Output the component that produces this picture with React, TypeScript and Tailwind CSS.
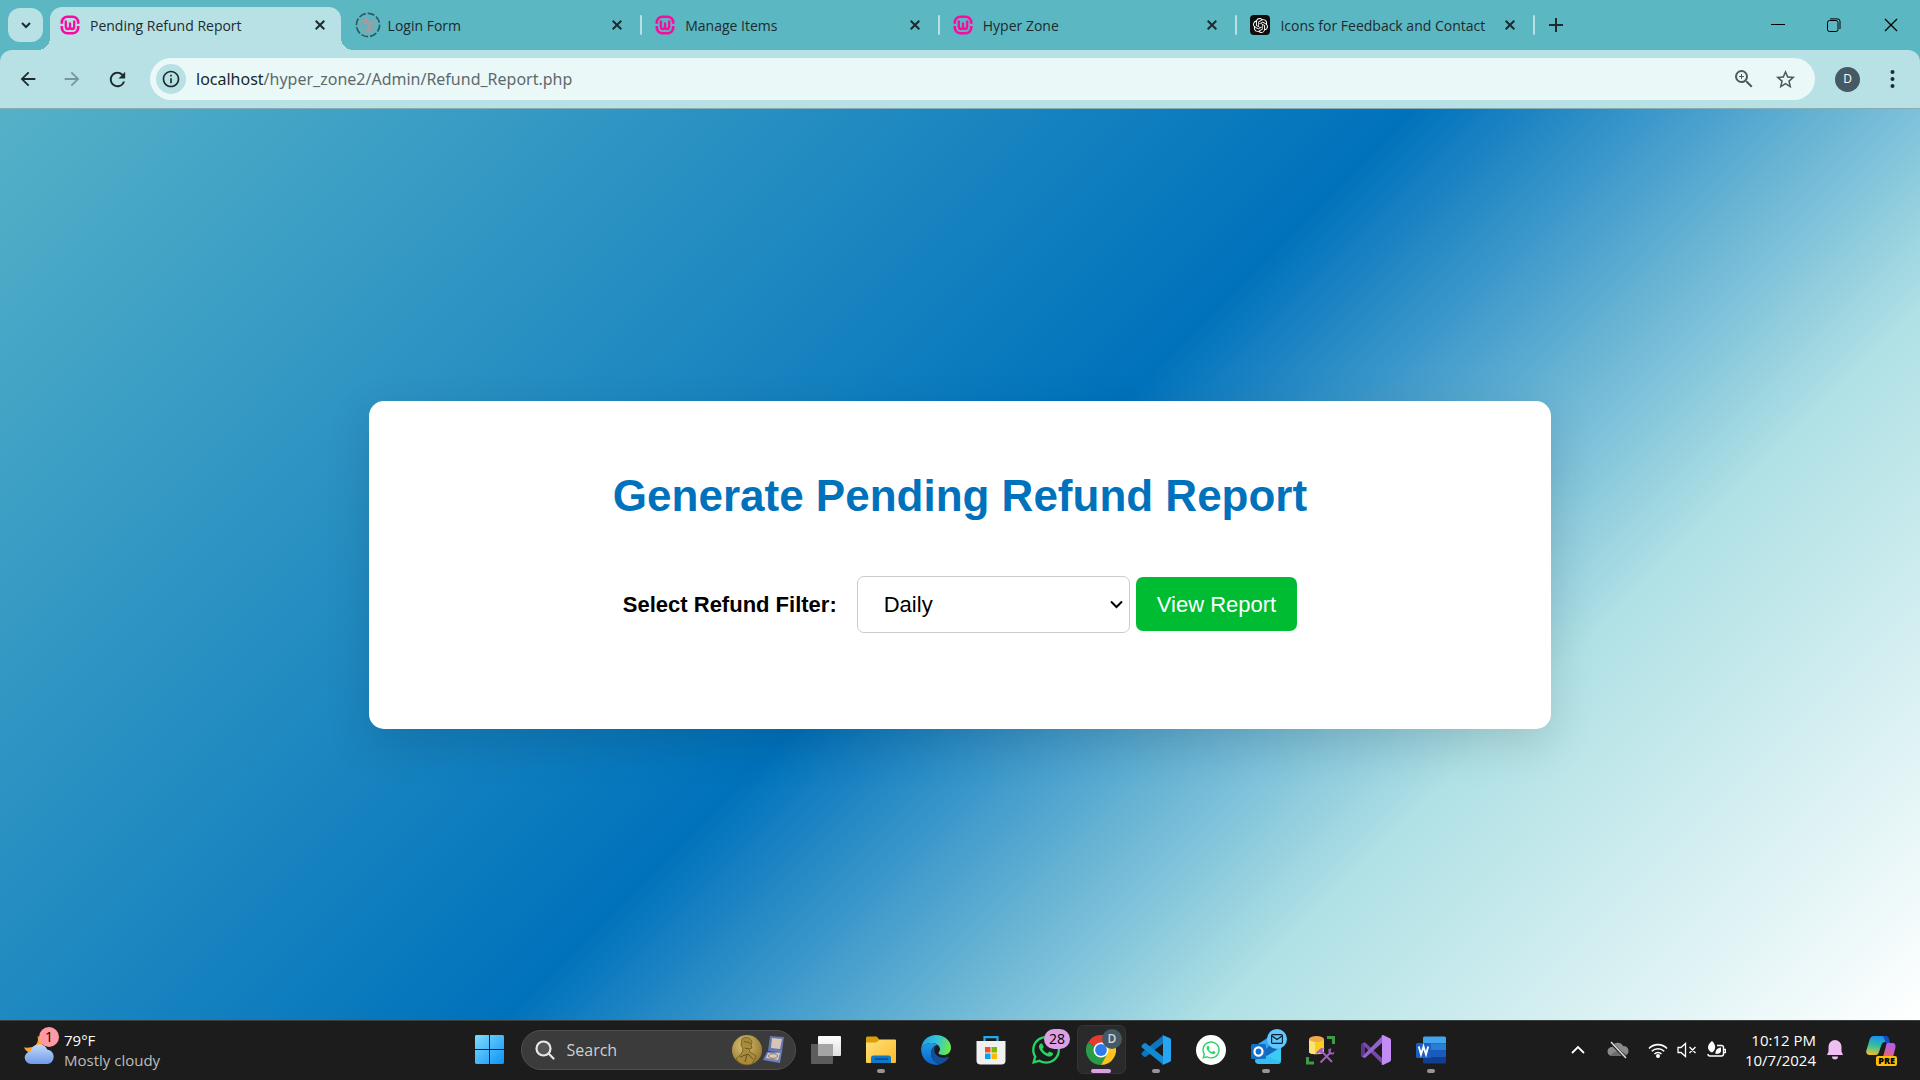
import { useState } from "react";
import type { ReactNode } from "react";
import { FaWhatsapp } from "react-icons/fa";
import { SiOpenai } from "react-icons/si";
import { MdOutlineZoomIn, MdStarBorder, MdRefresh, MdArrowBack, MdArrowForward, MdInfoOutline } from "react-icons/md";

/* ---------- Browser icons ---------- */

function WampIcon() {
  return (
    <svg width="20" height="20" viewBox="0 0 20 20" fill="none" stroke="#fb0aa0" strokeWidth="2.600">
      <path d="M1.800 8.800V7.300A5.500 5.500 0 0 1 7.300 1.800h5.400a5.500 5.500 0 0 1 5.500 5.500v1.500M1.800 11v1.700a5.500 5.500 0 0 0 5.500 5.500h5.400a5.500 5.500 0 0 0 5.500-5.500V11" />
      <path d="M5.800 5.500v6c0 3.300 4.200 3.300 4.200 0V7.500M10 11.500c0 3.300 4.200 3.300 4.200 0v-6" strokeWidth="2.300" />
    </svg>
  );
}

function LoadingGlobe() {
  return (
    <svg width="26" height="26" viewBox="0 0 26 26" fill="none">
      <circle cx="13" cy="13" r="11.600" stroke="#2f5963" strokeWidth="1.700" strokeDasharray="7 2" />
      <circle cx="13" cy="13" r="8" fill="#9a9fa4" />
      <path d="M6 10c3 0 3 3 6 3 2 1 0 4-2 6-3-1-5-5-4-9zM12 5.500c2 1 0 3 2 4s3-2 5 0c-1-3-4-4.500-7-4zM16 13c2-1 4 0 4.500 1-.5 2.500-2 4-3.500 4.500-1-2-2-4-1-5.500z" fill="#5fb3bd" />
    </svg>
  );
}

function GptIcon() {
  return (
    <span className="flex size-5 items-center justify-center rounded-sm bg-[#0d0d0d] text-white">
      <SiOpenai size={15} />
    </span>
  );
}

function CloseX({ size = 10, width = 2 }: { size?: number; width?: number }) {
  return (
    <svg width={size} height={size} viewBox="0 0 10 10" stroke="currentColor" strokeWidth={width} fill="none">
      <path d="M.7.7l8.600 8.600M9.300.7L.7 9.300" />
    </svg>
  );
}

/* ---------- Browser chrome ---------- */

const tabs: { title: string; icon: ReactNode; active?: boolean }[] = [
  { title: "Pending Refund Report", icon: <WampIcon />, active: true },
  { title: "Login Form", icon: <LoadingGlobe /> },
  { title: "Manage Items", icon: <WampIcon /> },
  { title: "Hyper Zone", icon: <WampIcon /> },
  { title: "Icons for Feedback and Contact", icon: <GptIcon /> },
];

function TabStrip() {
  return (
    <div className="flex h-[50px] bg-[#5bb7c1] text-[#1d2b2e]">
      <div className="flex w-[50px] shrink-0 items-center pl-2">
        <button aria-label="Search tabs" className="flex h-[34px] w-[35px] items-center justify-center rounded-xl bg-[#b7e1e4]">
          <svg width="10" height="7" viewBox="0 0 10 7" fill="none" stroke="currentColor" strokeWidth="2">
            <path d="M1 1l4 4 4-4" />
          </svg>
        </button>
      </div>
      <div className="flex w-full max-w-[1488px]">
        {tabs.map((tab, i) => (
          <div key={tab.title} className="flex min-w-0 flex-1 items-stretch">
            <div
              className={
                tab.active
                  ? "relative mt-[7px] flex min-w-0 flex-1 items-center rounded-t-xl bg-[#b7e1e4] pr-[11px] pb-[7px] pl-[10px]"
                  : "flex min-w-0 flex-1 items-center pr-[11px] pl-[10px]"
              }
            >
              {tab.active && (
                <>
                  <span className="absolute bottom-0 -left-3 size-3 bg-[radial-gradient(circle_at_0_0,transparent_12px,#b7e1e4_12px)]" />
                  <span className="absolute -right-3 bottom-0 size-3 bg-[radial-gradient(circle_at_100%_0,transparent_12px,#b7e1e4_12px)]" />
                </>
              )}
              <span className="flex w-5 shrink-0 items-center justify-center">
                <span className="shrink-0">{tab.icon}</span>
              </span>
              <span className="ml-[10px] min-w-0 flex-1 overflow-hidden text-[14px] whitespace-nowrap">{tab.title}</span>
              <button aria-label={`Close ${tab.title}`} className="flex size-5 shrink-0 items-center justify-center">
                <CloseX />
              </button>
            </div>
            <div className="flex w-[7px] shrink-0 items-center pl-[2px]">
              {i > 0 && <span className="h-5 w-[2px] rounded bg-[#b7e1e4]" />}
            </div>
          </div>
        ))}
      </div>
      <button aria-label="New tab" className="flex w-[35px] shrink-0 items-center justify-center">
        <svg width="14" height="14" viewBox="0 0 14 14" stroke="currentColor" strokeWidth="2">
          <path d="M7 0v14M0 7h14" />
        </svg>
      </button>
      <div className="ml-auto flex shrink-0 text-black">
        <button aria-label="Minimize" className="flex w-14 items-center justify-center">
          <svg width="14" height="14" viewBox="0 0 14 14" stroke="currentColor">
            <path d="M0 6.500h14" />
          </svg>
        </button>
        <button aria-label="Restore" className="flex w-14 items-center justify-center">
          <svg width="14" height="14" viewBox="0 0 14 14" stroke="currentColor" fill="none">
            <rect x=".5" y="2.500" width="10.500" height="11" rx="2" />
            <path d="M3 .9h7.500a2.500 2.500 0 0 1 2.500 2.500V11" />
          </svg>
        </button>
        <button aria-label="Close window" className="flex w-[58px] items-center justify-center">
          <CloseX size={14} width={0.9} />
        </button>
      </div>
    </div>
  );
}

function Toolbar() {
  return (
    <div className="bg-[#5bb7c1]">
      <div className="flex h-[58px] items-center rounded-t-xl bg-[#b7e1e4] pr-4 pl-[6px] text-[#1d2b2e]">
        <button aria-label="Back" className="flex w-11 justify-center">
          <MdArrowBack size={22} />
        </button>
        <button aria-label="Forward" className="flex w-11 justify-center text-[#77979b]">
          <MdArrowForward size={22} />
        </button>
        <button aria-label="Reload" className="flex w-[46px] justify-center">
          <MdRefresh size={23} />
        </button>
        <div className="ml-[10px] flex h-[42px] min-w-0 flex-1 items-center rounded-full bg-[#ebf8f8] pr-[18px] pl-[6px]">
          <button aria-label="Site information" className="flex size-[30px] items-center justify-center rounded-full bg-[#b7e1e4]">
            <MdInfoOutline size={20} />
          </button>
          <p className="ml-[10px] flex-1 font-['Noto_Sans','Segoe_UI',sans-serif] text-[16px] text-[#5d6a6d]">
            <span className="text-[#17292c]">localhost</span>/hyper_zone2/Admin/Refund_Report.php
          </p>
          <button aria-label="Zoom" className="flex w-10 justify-center text-[#50595b]">
            <MdOutlineZoomIn size={24} />
          </button>
          <button aria-label="Bookmark this tab" className="ml-[9px] flex w-6 justify-center text-[#50595b]">
            <MdStarBorder size={23} />
          </button>
        </div>
        <button aria-label="Profile" className="ml-5 flex size-[25px] items-center justify-center rounded-full bg-[#455a64] text-[12px] text-white">
          D
        </button>
        <button aria-label="Menu" className="ml-5 flex w-6 justify-center">
          <svg width="5" height="22" viewBox="0 0 5 22" fill="currentColor">
            <circle cx="2.500" cy="4" r="2" />
            <circle cx="2.500" cy="11" r="2" />
            <circle cx="2.500" cy="18" r="2" />
          </svg>
        </button>
      </div>
    </div>
  );
}

/* ---------- Report page ---------- */

function ReportPage() {
  const [filter, setFilter] = useState("Daily");
  return (
    <main className="flex flex-1 items-center justify-center bg-[linear-gradient(135deg,#55b1c8_0%,#0072bc_50%,#b0e1e5_75%,#ffffff_100%)] font-['Liberation_Sans',Arial,sans-serif]">
      <section className="w-full max-w-[1182px] rounded-[15px] bg-white pt-[69px] pb-24 text-center shadow-[0_15px_45px_rgba(0,0,0,0.13)]">
        <h1 className="text-[44px] leading-[52px] font-bold text-[#0072bc]">Generate Pending Refund Report</h1>
        <form className="mt-[54px] flex items-center justify-center text-[22px] text-black" onSubmit={(e) => e.preventDefault()}>
          <label htmlFor="filter" className="font-bold">
            Select Refund Filter:
          </label>
          <div className="relative ml-5">
            <select
              id="filter"
              value={filter}
              onChange={(e) => setFilter(e.target.value)}
              className="h-[57px] w-[273px] appearance-none rounded-[7px] border border-[#cccccc] bg-white pl-[26px]"
            >
              <option>Daily</option>
              <option>Weekly</option>
              <option>Monthly</option>
            </select>
            <svg className="pointer-events-none absolute top-6 right-[7px]" width="13" height="9" viewBox="0 0 13 9" fill="none" stroke="#000" strokeWidth="2">
              <path d="M1 1.500l5.500 5.500L12 1.500" />
            </svg>
          </div>
          <button type="submit" className="ml-[6px] h-[54px] rounded-[7px] bg-[#00bc32] px-[21px] text-white">
            View Report
          </button>
        </form>
      </section>
    </main>
  );
}

/* ---------- Taskbar ---------- */

function WeatherIcon() {
  return (
    <svg width="31" height="31" viewBox="0 0 32 32">
      <defs>
        <linearGradient id="cloud" x1="0" y1="0" x2="0" y2="1">
          <stop offset="0" stopColor="#c3d9fb" />
          <stop offset="1" stopColor="#6f9be8" />
        </linearGradient>
      </defs>
      <path d="M14 2c2 8-3 13-14 12 3 7 12 7 17 1s1-11-3-13z" fill="#f9a62b" />
      <path d="M7.500 31a6.500 6.500 0 0 1-.5-13 9 9 0 0 1 17-2A7.600 7.600 0 0 1 24.500 31z" fill="url(#cloud)" />
    </svg>
  );
}

function StartIcon() {
  return (
    <svg width="29" height="29" viewBox="0 0 29 29">
      <defs>
        <linearGradient id="start" x1="0" y1="0" x2="1" y2="1">
          <stop offset="0" stopColor="#7fdcfb" />
          <stop offset="1" stopColor="#0c93f7" />
        </linearGradient>
      </defs>
      <path d="M1 0h13v14H0V1zM15 0h13l1 1v13H15zM0 15h14v14H1l-1-1zM15 15h14v13l-1 1H15z" fill="url(#start)" />
    </svg>
  );
}

function MedalIcon() {
  return (
    <svg width="54" height="32" viewBox="0 0 54 32">
      <defs>
        <radialGradient id="gold" cx=".4" cy=".35" r=".7">
          <stop offset="0" stopColor="#d9c27a" />
          <stop offset="1" stopColor="#927527" />
        </radialGradient>
      </defs>
      <circle cx="16" cy="16" r="15" fill="url(#gold)" />
      <path d="M11 5c4-3 9-1 10 3l-1 3 1 3-3 1 1 3 6 4-4 8c-5 2-12 1-16-5l6-6 1-4-2-4z" fill="#a88c3c" stroke="#6e5518" strokeWidth=".8" />
      <path d="M13 7c2 2 5 0 6 3M14 14c2 1 3 0 4 1M9 23l8-3 5 5M16 21l-2 7" stroke="#665018" fill="none" />
      <path d="M39 2l14 1-2 15-14-1z" fill="#6577ab" />
      <path d="M41 4l10 1-2 10-9-1z" fill="#d9c4b8" />
      <path d="M36 18l15-1-2 12-17-3z" fill="#6f83b8" />
      <path d="M37 19l12 0-2 7-12-2z" fill="#dbc9bd" />
      <ellipse cx="42" cy="22" rx="4.500" ry="2.300" fill="none" stroke="#8c7461" />
    </svg>
  );
}

function TaskViewIcon() {
  return (
    <svg width="30" height="28" viewBox="0 0 30 28">
      <defs>
        <linearGradient id="tv" x1="0" y1="0" x2="0" y2="1">
          <stop offset="0" stopColor="#fff" />
          <stop offset="1" stopColor="#dedede" />
        </linearGradient>
      </defs>
      <rect x="0" y="8" width="22" height="20" rx="1" fill="#5c5c5c" />
      <rect x="7" y="0" width="23" height="20" rx="1" fill="url(#tv)" />
      <path d="M7 8h15v12H7z" fill="#a5a5a5" />
    </svg>
  );
}

function ExplorerIcon() {
  return (
    <svg width="30" height="28" viewBox="0 0 30 28">
      <defs>
        <linearGradient id="fold" x1="0" y1="0" x2="1" y2="1">
          <stop offset="0" stopColor="#ffe07a" />
          <stop offset="1" stopColor="#fcbc28" />
        </linearGradient>
      </defs>
      <path d="M0 2a1.500 1.500 0 0 1 1.500-1.500h9L14 4v6H0z" fill="#dd9d05" />
      <path d="M0 6.500h10l4-3h15a1 1 0 0 1 1 1V26a1 1 0 0 1-1 1H1a1 1 0 0 1-1-1z" fill="url(#fold)" />
      <path d="M5 27v-5a2.500 2.500 0 0 1 2.500-2.500h15A2.500 2.500 0 0 1 25 22v5z" fill="#0f78c8" />
      <path d="M9 23h13" stroke="#064b8a" strokeWidth="1.500" />
    </svg>
  );
}

function EdgeIcon() {
  return (
    <svg width="30" height="30" viewBox="0 0 30 30">
      <defs>
        <linearGradient id="edgeA" x1="0" y1=".2" x2="1" y2=".4">
          <stop offset="0" stopColor="#1fa1e0" />
          <stop offset=".5" stopColor="#33c1dc" />
          <stop offset="1" stopColor="#6be94a" />
        </linearGradient>
        <linearGradient id="edgeB" x1="0" y1="0" x2="0" y2="1">
          <stop offset="0" stopColor="#1e9ce6" />
          <stop offset="1" stopColor="#0a63c6" />
        </linearGradient>
      </defs>
      <path d="M.2 13C1.300 5 7.500 0 15 0c8.500 0 15 6 15 12.500 0 5-3.500 7.500-7.500 7.500-3 0-5-1-5-2s1.500-1.500 1.500-4c0-3-3.500-6-8-6S2 10 .2 13z" fill="url(#edgeA)" />
      <path d="M.2 13C2 10 6.500 8 11 8c2 0 4 .8 5.500 2-3 .3-6.500 3.500-6.500 8.500 0 6 5 10 9 10.800C10 32-.8 25 .2 13z" fill="url(#edgeB)" />
      <path d="M14 11c-2.500 1.500-4 4.500-4 7.500 0 6 5 10 9 10.800 4-1.300 7-3.800 8.700-6.800.3-.6-.2-1-.9-.7-6 2.700-14.800-.8-13.300-8.300.2-1 .4-1.700.5-2.500z" fill="#12509d" />
    </svg>
  );
}

function StoreIcon() {
  return (
    <svg width="30" height="30" viewBox="0 0 30 30">
      <path d="M8.500 8V2.200h13V8" fill="none" stroke="#27a8e6" strokeWidth="2.200" />
      <path d="M.5 6h29v19.500a4 4 0 0 1-4 4h-21a4 4 0 0 1-4-4z" fill="#f0f0f0" />
      <path d="M9 12h5.500v5.500H9z" fill="#f25022" />
      <path d="M15.500 12H21v5.500h-5.500z" fill="#7fba00" />
      <path d="M9 18.500h5.500V24H9z" fill="#00a4ef" />
      <path d="M15.500 18.500H21V24h-5.500z" fill="#ffb900" />
    </svg>
  );
}

function ChromeIcon() {
  return (
    <svg width="30" height="30" viewBox="0 0 30 30">
      <path d="M15 15L2 7.500A15 15 0 0 1 28 7.500z" fill="#e33b2e" />
      <path d="M15 15L2 7.500A15 15 0 0 0 15 30l7-11z" fill="#2a9b49" />
      <path d="M15 7.500h13A15 15 0 0 1 15 30l6.500-11.500z" fill="#fcc31e" />
      <circle cx="15" cy="15" r="7.500" fill="#fff" />
      <circle cx="15" cy="15" r="5.900" fill="#2f7bed" />
    </svg>
  );
}

function VsCodeIcon() {
  return (
    <svg width="30" height="30" viewBox="0 0 30 30">
      <path d="M22 .5L29 3.500v8L22 8.500 4.500 22 3 21.800.6 19.600v-1.800z" fill="#0d76bf" />
      <path d="M22 29.500l7-3v-8l-7 3L4.500 8 3 8.200.6 10.400v1.800z" fill="#1289d3" />
      <path d="M22 .3l7 3a1.500 1.500 0 0 1 1 1.400v20.600a1.500 1.500 0 0 1-1 1.400l-7 3c-.8.300-1.500.2-2-.3.800.6 2 0 2-1V1.600c0-1-1.200-1.600-2-1 .5-.5 1.200-.6 2-.3z" fill="#27a5f2" />
    </svg>
  );
}

function OutlookIcon() {
  return (
    <svg width="30" height="30" viewBox="0 0 30 30">
      <path d="M4 12L18 1l12 10v14a4 4 0 0 1-4 4H8a4 4 0 0 1-4-4z" fill="#1565bd" />
      <path d="M5 10L19 2l5 3-14 14z" fill="#3aa7ee" />
      <path d="M6 27L30 12v13a4 4 0 0 1-4 4H8z" fill="#3ccbf4" />
      <path d="M14 20l16 7a4 4 0 0 1-4 2H8a4 4 0 0 1-4-4z" fill="#38bdf0" />
      <rect x="0" y="9" width="15" height="15" rx="1.500" fill="#1070cc" />
      <ellipse cx="7.500" cy="16.500" rx="4" ry="4.200" fill="none" stroke="#fff" strokeWidth="2.200" />
    </svg>
  );
}

function SqlToolsIcon() {
  return (
    <svg width="30" height="30" viewBox="0 0 30 30">
      <path d="M3 4v13c0 3 15 3 15 0V4z" fill="#f9cf1f" />
      <path d="M3 4v13c0 1.200 2.500 2 6 2.200V4z" fill="#fde372" />
      <ellipse cx="10.500" cy="4" rx="7.500" ry="3" fill="#f0a848" />
      <path d="M21 2.500h6.500V9M1.500 22v6H8" fill="none" stroke="#3f9a45" strokeWidth="3" />
      <path d="M14.500 15l11.500 12M24.500 17.500L14.500 27.500" stroke="#a55cc0" strokeWidth="2" />
      <path d="M10 17.500l5-4.500 4 .5-2.500 1.500.5 1.500-2 2-2-1-1.500 1.500zM22.500 14v3.500l2 2h3l1-3-2 1.500-2-1.500 1-3z" fill="#a55cc0" />
    </svg>
  );
}

function VisualStudioIcon() {
  return (
    <svg width="30" height="30" viewBox="0 0 30 30">
      <path d="M0 10c0-.6.300-1 .8-1.200L4 7.500V23l-3.200-1.300c-.5-.2-.8-.6-.8-1.200z" fill="#5c3591" />
      <path d="M4 7.300L22 24v5.800L2.800 10.800 1 8.600z" fill="#7649a8" />
      <path d="M4 23L22 7V.2L1 21.700z" fill="#9364cb" />
      <path d="M22 0l6.800 3.200c.8.400 1.200 1 1.200 1.800v20c0 .8-.4 1.400-1.200 1.800L22 30l-1.500-.6L21 28V2l-.5-1.400z" fill="#c38cf5" />
    </svg>
  );
}

function WordIcon() {
  return (
    <svg width="30" height="28" viewBox="0 0 30 28">
      <path d="M7 2a1.500 1.500 0 0 1 1.500-1.500h20A1.500 1.500 0 0 1 30 2v5.500H7z" fill="#41a5ee" />
      <path d="M7 7.500h23V14H7z" fill="#2b7cd3" />
      <path d="M7 14h23v7H7z" fill="#185abd" />
      <path d="M7 21h23v5a1.500 1.500 0 0 1-1.500 1.500h-20A1.500 1.500 0 0 1 7 26z" fill="#103f91" />
      <rect x="0" y="7" width="15" height="15" rx="1.500" fill="#1a5fc4" />
      <path d="M2.800 10.500l2.200 8 2.500-8 2.500 8 2.200-8" fill="none" stroke="#fff" strokeWidth="1.900" />
    </svg>
  );
}

function CopilotIcon() {
  return (
    <svg width="30" height="30" viewBox="0 0 30 30">
      <defs>
        <linearGradient id="cpA" x1=".5" y1="0" x2=".3" y2="1">
          <stop offset="0" stopColor="#1c8ef0" />
          <stop offset=".5" stopColor="#2fbfa5" />
          <stop offset="1" stopColor="#e6c32e" />
        </linearGradient>
        <linearGradient id="cpB" x1=".6" y1="0" x2=".3" y2="1">
          <stop offset="0" stopColor="#b05cf0" />
          <stop offset="1" stopColor="#f8655f" />
        </linearGradient>
      </defs>
      <path d="M8 1h11c2 0 3 1 3.500 3L23 7h-4c-2 0-3 1-4 4l-2 6c-.6 2-1.500 3-3.500 3H4c-3 0-4.500-2-3.500-5l3-10C4.300 2.500 5.500 1 8 1z" fill="url(#cpA)" />
      <path d="M17 1h3c1.500 0 2.500 1 3 3l1 4h-4z" fill="#1b49c4" />
      <path d="M21 8h5c3 0 4 2 3.300 5l-2 8c-.5 2-2 3-4 3h-9c2-.5 2.600-2 3.200-4l2-7c.5-2 .5-4 1.500-5z" fill="url(#cpB)" />
    </svg>
  );
}

function AppButton({ label, children, indicator }: { label: string; children: ReactNode; indicator?: "open" | "active" }) {
  return (
    <button aria-label={label} className="relative flex h-full w-[55px] shrink-0 items-center justify-center">
      {indicator === "active" && <span className="absolute inset-x-[3px] top-1 bottom-1 rounded-md border border-[#343434] bg-[#2a2a2a]" />}
      <span className="relative">{children}</span>
      {indicator === "open" && <span className="absolute bottom-[5px] h-1 w-2 rounded-full bg-[#959595]" />}
      {indicator === "active" && <span className="absolute bottom-[5px] h-1 w-5 rounded-full bg-[#dba0e5]" />}
    </button>
  );
}

function Taskbar() {
  return (
    <footer className="grid h-[60px] grid-cols-[1fr_auto_1fr] border-t border-[#3a3f40] bg-[#1c1c1c] pb-[2px] text-[15px] leading-5 text-white">
      <button className="flex items-center pl-6 text-left" aria-label="Weather, 79°F, mostly cloudy">
        <span className="relative">
          <WeatherIcon />
          <span className="absolute -top-[7px] left-[15px] flex size-5 items-center justify-center rounded-full bg-[#ff99a4] text-[14px] text-black">1</span>
        </span>
        <span className="ml-[9px] flex flex-col">
          <span>79°F</span>
          <span className="text-[#bdbdbd]">Mostly cloudy</span>
        </span>
      </button>

      <div className="flex items-center">
        <AppButton label="Start">
          <StartIcon />
        </AppButton>
        <label className="mr-[3px] ml-1 flex h-10 w-[275px] items-center rounded-full border border-[#505050] bg-[#3b3b3b] pr-[10px] pl-[13px]">
          <svg width="20" height="20" viewBox="0 0 20 20" fill="#555" stroke="#e8e8e8" strokeWidth="2.200" strokeLinecap="round">
            <circle cx="8.500" cy="8.500" r="7" />
            <path d="M13.800 13.800L18.500 18.500" />
          </svg>
          <input aria-label="Search" placeholder="Search" className="ml-3 min-w-0 flex-1 bg-transparent text-[16px] outline-none placeholder:text-[#cfcfcf]" />
          <MedalIcon />
        </label>
        <AppButton label="Task view">
          <TaskViewIcon />
        </AppButton>
        <AppButton label="File Explorer" indicator="open">
          <ExplorerIcon />
        </AppButton>
        <AppButton label="Edge">
          <EdgeIcon />
        </AppButton>
        <AppButton label="Microsoft Store">
          <StoreIcon />
        </AppButton>
        <AppButton label="WhatsApp, 28 unread">
          <FaWhatsapp size={32} color="#25d366" />
          <span className="absolute -top-[5px] left-[14px] flex h-5 w-[26px] items-center justify-center rounded-full bg-[#dba0e5] text-[14px] text-black">28</span>
        </AppButton>
        <AppButton label="Chrome" indicator="active">
          <ChromeIcon />
          <span className="absolute -top-[6px] left-4 flex size-5 items-center justify-center rounded-full bg-[#455a64] text-[12px] font-semibold text-[#cfd8dc]">D</span>
        </AppButton>
        <AppButton label="Visual Studio Code" indicator="open">
          <VsCodeIcon />
        </AppButton>
        <AppButton label="WhatsApp Web">
          <span className="flex size-[30px] items-center justify-center rounded-full bg-white">
            <FaWhatsapp size={20} color="#2fd468" />
          </span>
        </AppButton>
        <AppButton label="Outlook" indicator="open">
          <OutlookIcon />
          <span className="absolute -top-[6px] left-4 flex size-5 items-center justify-center rounded-full bg-[#60c8ff]">
            <svg width="12" height="10" viewBox="0 0 12 10" fill="none" stroke="#10202a" strokeWidth="1.200">
              <rect x=".6" y=".6" width="10.800" height="8.800" rx="1" />
              <path d="M1 2l5 3.500L11 2" />
            </svg>
          </span>
        </AppButton>
        <AppButton label="SQL Server tools">
          <SqlToolsIcon />
        </AppButton>
        <AppButton label="Visual Studio">
          <VisualStudioIcon />
        </AppButton>
        <AppButton label="Word" indicator="open">
          <WordIcon />
        </AppButton>
      </div>

      <div className="flex items-center justify-end pr-6">
        <button aria-label="Show hidden icons" className="flex w-10 justify-center">
          <svg width="14" height="9" viewBox="0 0 14 9" fill="none" stroke="#fff" strokeWidth="1.800">
            <path d="M1 8l6-6 6 6" />
          </svg>
        </button>
        <button aria-label="OneDrive" className="flex w-10 justify-center">
          <svg width="22" height="18" viewBox="0 0 22 18">
            <path d="M5 15a4.500 4.500 0 0 1 0-9 6 6 0 0 1 11-1 5 5 0 0 1 1 10z" fill="#8a8a8a" />
            <path d="M3 14l8-5 9 4c-1 1.500-2 2-3 2H5z" fill="#6d6d6d" />
            <path d="M3 1l16 16" stroke="#1c1c1c" strokeWidth="3" />
            <path d="M4 1l15 16" stroke="#e5e5e5" strokeWidth="1.400" />
          </svg>
        </button>
        <button aria-label="Network, volume and battery" className="flex items-center gap-[9px] pr-4 pl-[10px]">
          <svg width="20" height="16" viewBox="0 0 20 16" fill="none" stroke="#fff" strokeWidth="1.600">
            <path d="M1 6.500a12.500 12.500 0 0 1 18 0M3.800 9.300a8.700 8.700 0 0 1 12.400 0M6.500 12a5 5 0 0 1 7 0" />
            <circle cx="10" cy="14" r="1.200" fill="#fff" />
          </svg>
          <svg width="20" height="16" viewBox="0 0 20 16" fill="none" stroke="#fff" strokeWidth="1.300">
            <path d="M1 5.500h3L8.500 1.500v13L4 10.500H1zM12.500 5l6 6M18.500 5l-6 6" />
          </svg>
          <svg width="20" height="18" viewBox="0 0 20 18" fill="none" stroke="#fff" strokeWidth="1.400">
            <path d="M11 4.500h4.500a2 2 0 0 1 2 2v6.500a2 2 0 0 1-2 2H4a2 2 0 0 1-2-2" />
            <path d="M17.500 8.500H19.500v3h-2" />
            <path d="M6 0c4.500 4 4 9 0 11.500C.5 9 1 3.500 6 0zM9.500 13c0-4 1.500-6 5.500-6.500V10c0 2-2 3-5.500 3z" fill="#fff" stroke="none" />
          </svg>
        </button>
        <button aria-label="Clock" className="flex w-[74px] flex-col items-end">
          <span className="whitespace-nowrap">10:12 PM</span>
          <span>10/7/2024</span>
        </button>
        <button aria-label="Notifications" className="ml-[9px] flex w-5 justify-center">
          <svg width="16" height="20" viewBox="0 0 16 20" fill="#f0bff2">
            <path d="M8 0a6.500 6.500 0 0 1 6.500 6.500v5l1.500 3.500H0l1.500-3.500v-5A6.500 6.500 0 0 1 8 0zM5 16.500h6a3 3 0 0 1-6 0z" />
          </svg>
        </button>
        <button aria-label="Copilot preview" className="relative ml-[21px]">
          <CopilotIcon />
          <span className="absolute -right-[1px] -bottom-[1px] rounded-[2px] bg-[#fcc00a] px-[2px] text-[9px] leading-[10px] font-extrabold text-black">PRE</span>
        </button>
      </div>
    </footer>
  );
}

export default function App() {
  return (
    <div className="flex min-h-screen flex-col font-['Open_Sans','Segoe_UI',sans-serif]">
      <header className="border-b border-[#86adb3]">
        <TabStrip />
        <Toolbar />
      </header>
      <ReportPage />
      <Taskbar />
    </div>
  );
}
